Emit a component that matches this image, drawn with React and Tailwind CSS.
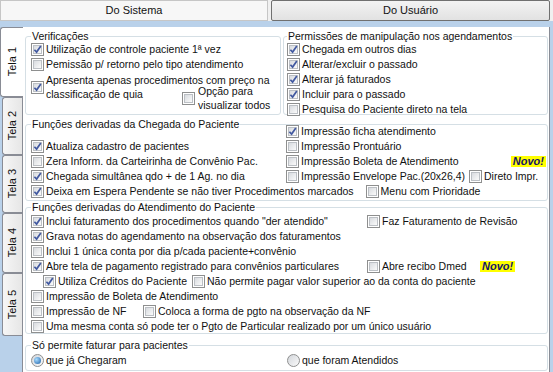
import React from 'react';

function Box({ checked }) {
  return (
    <span className="relative block w-[13px] h-[13px] shrink-0 border border-[#8e8f8f] bg-white p-[1px]">
      <span className="block w-full h-full border border-[#bcc0c5] bg-linear-to-br from-[#d8dbdf] to-[#fbfbfb]" />
      {checked && (
        <svg className="absolute left-0 top-0" width="11" height="11" viewBox="0 0 11 11">
          <path d="M2.4 5.7 L4.6 8.1 L8.8 2" fill="none" stroke="#4259a0" strokeWidth="1.7" />
        </svg>
      )}
    </span>
  );
}

function Check({ checked, children, className = '' }) {
  return (
    <div className={`flex items-center h-[15px] shrink-0 ${className}`}>
      <Box checked={checked} />
      <span className="ml-[2px] whitespace-nowrap">{children}</span>
    </div>
  );
}

function Radio({ checked, children, className = '' }) {
  return (
    <div className={`flex items-center h-[15px] ${className}`}>
      <span className="flex items-center justify-center w-[13px] h-[13px] rounded-full border border-[#8e8f8f] bg-linear-to-br from-[#d3d6db] to-[#fafafa]">
        {checked && (
          <span className="w-[7px] h-[7px] rounded-full bg-[radial-gradient(circle_at_35%_35%,#a8dcff,#1d5fa6)]" />
        )}
      </span>
      <span className="ml-[2px] whitespace-nowrap">{children}</span>
    </div>
  );
}

function Novo({ className = '' }) {
  return (
    <span className={`inline-block bg-[#ffff00] px-[2px] h-[11px] leading-[11px] text-[11px] font-bold italic text-[#14146a] ${className}`}>
      Novo!
    </span>
  );
}

function Tab({ label, active, className = '' }) {
  return (
    <div
      className={`flex items-center justify-center border border-r-0 border-[#898c95] rounded-l-[3px] ${
        active ? 'relative z-10 w-[23px] bg-white' : 'ml-[2px] w-[20px] bg-linear-to-r from-[#f6f6f6] to-[#e6e6e6]'
      } ${className}`}
    >
      <span className="[writing-mode:vertical-rl] rotate-180 whitespace-nowrap text-[11px]">{label}</span>
    </div>
  );
}

export default function App() {
  return (
    <div className="w-[553px] h-[372px] overflow-hidden bg-[#b9d1ea] text-[10.5px] leading-[13px] text-[#111] font-['Liberation_Sans',Arial,sans-serif]">
      {/* top buttons */}
      <div className="flex h-[21px] bg-[#f0f0f0] text-[11px]">
        <div className="w-[268px] flex items-center justify-center border border-[#c6c6c6] bg-[#f7f7f7]">
          Do Sistema
        </div>
        <div className="ml-[3px] w-[279px] flex items-center justify-center border border-[#707070] rounded-[2px] bg-linear-to-b from-[#f3f3f3] to-[#e2e2e2]">
          Do Usuário
        </div>
      </div>

      <div className="mt-[6px] flex h-[345px]">
        {/* side tabs */}
        <div className="w-[22px] flex flex-col">
          <Tab label="Tela 1" active className="h-[70px]" />
          <Tab label="Tela 2" className="h-[58px]" />
          <Tab label="Tela 3" className="h-[58px]" />
          <Tab label="Tela 4" className="h-[60px]" />
          <Tab label="Tela 5" className="h-[63px]" />
        </div>

        {/* panel */}
        <div className="w-[528px] bg-white border-l border-r border-[#898c95] pl-[2px] pr-[1px] flex flex-col">
          <div className="mt-[3px] flex gap-[2px]">
            <fieldset className="w-[256px] h-[85px] border border-[#d5dfe5] rounded-[3px] pl-[5px]">
              <legend className="px-[1px]">Verificações</legend>
              <div className="-mt-[1px]">
                <Check checked>Utilização de controle paciente 1ª vez</Check>
                <Check>Pemissão p/ retorno pelo tipo atendimento</Check>
                <div className="mt-[1px] flex leading-[14px]">
                  <span className="mt-[8px]">
                    <Box checked />
                  </span>
                  <div className="ml-[2px]">
                    <div className="whitespace-nowrap">Apresenta apenas procedimentos com preço na</div>
                    <div className="flex">
                      <span className="w-[136px] whitespace-nowrap">classificação de quia</span>
                      <div className="-mt-[3px] flex items-center">
                        <Box />
                        <div className="ml-[3px]">
                          <div>Opção para</div>
                          <div>visualizar todos</div>
                        </div>
                      </div>
                    </div>
                  </div>
                </div>
              </div>
            </fieldset>

            <fieldset className="flex-1 h-[85px] border border-[#d5dfe5] rounded-[3px] pl-[3px]">
              <legend className="px-[1px]">Permissões de manipulação nos agendamentos</legend>
              <div className="-mt-[1px]">
                <Check checked>Chegada em outros dias</Check>
                <Check checked>Alterar/excluir o passado</Check>
                <Check checked>Alterar já faturados</Check>
                <Check checked>Incluir para o passado</Check>
                <Check>Pesquisa do Paciente direto na tela</Check>
              </div>
            </fieldset>
          </div>

          <fieldset className="mt-[3px] h-[83px] border border-[#d5dfe5] rounded-[3px] pl-[5px]">
            <legend className="px-[1px]">Funções derivadas da Chegada do Paciente</legend>
            <div className="-mt-[7px] flex">
              <div className="w-[255px]">
                <div className="h-[15px]" />
                <Check checked>Atualiza cadastro de pacientes</Check>
                <Check>Zera Inform. da Carteirinha de Convênio Pac.</Check>
                <Check checked>Chegada simultânea qdo + de 1 Ag. no dia</Check>
              </div>
              <div className="flex-1 pr-[1px]">
                <Check checked>Impressão ficha atendimento</Check>
                <Check>Impressão Prontuário</Check>
                <div className="flex items-center">
                  <Check>Impressão Boleta de Atendimento</Check>
                  <Novo className="ml-auto" />
                </div>
                <div className="flex">
                  <Check>Impressão Envelope Pac.(20x26,4)</Check>
                  <Check className="ml-[4px]">Direto Impr.</Check>
                </div>
              </div>
            </div>
            <div className="flex">
              <Check checked>Deixa em Espera Pendente se não tiver Procedimentos marcados</Check>
              <Check className="ml-[12px]">Menu com Prioridade</Check>
            </div>
          </fieldset>

          <fieldset className="h-[133px] border border-[#d5dfe5] rounded-[3px] pl-[5px]">
            <legend className="px-[1px]">Funções derivadas do Atendimento do Paciente</legend>
            <div>
              <div className="flex">
                <Check checked className="w-[336px]">
                  Inclui faturamento dos procedimentos quando "der atendido"
                </Check>
                <Check>Faz Faturamento de Revisão</Check>
              </div>
              <Check checked>Grava notas do agendamento na observação dos faturamentos</Check>
              <Check>Inclui 1 única conta por dia p/cada paciente+convênio</Check>
              <div className="flex items-center">
                <Check checked className="w-[336px]">
                  Abre tela de pagamento registrado para convênios particulares
                </Check>
                <Check className="w-[113px]">Abre recibo Dmed</Check>
                <Novo />
              </div>
              <div className="flex pl-[12px]">
                <Check checked>Utiliza Créditos do Paciente</Check>
                <Check className="ml-[5px]">Não permite pagar valor superior ao da conta do paciente</Check>
              </div>
              <Check>Impressão de Boleta de Atendimento</Check>
              <div className="flex">
                <Check className="w-[112px]">Impressão de NF</Check>
                <Check>Coloca a forma de pgto na observação da NF</Check>
              </div>
              <Check>Uma mesma conta só pode ter o Pgto de Particular realizado por um único usuário</Check>
            </div>
          </fieldset>

          <fieldset className="mt-[5px] h-[32px] border border-[#d5dfe5] rounded-[3px] pl-[5px]">
            <legend className="px-[1px]">Só permite faturar para pacientes</legend>
            <div className="mt-[1px] flex">
              <Radio checked className="w-[256px]">que já Chegaram</Radio>
              <Radio>que foram Atendidos</Radio>
            </div>
          </fieldset>
        </div>
      </div>
    </div>
  );
}
